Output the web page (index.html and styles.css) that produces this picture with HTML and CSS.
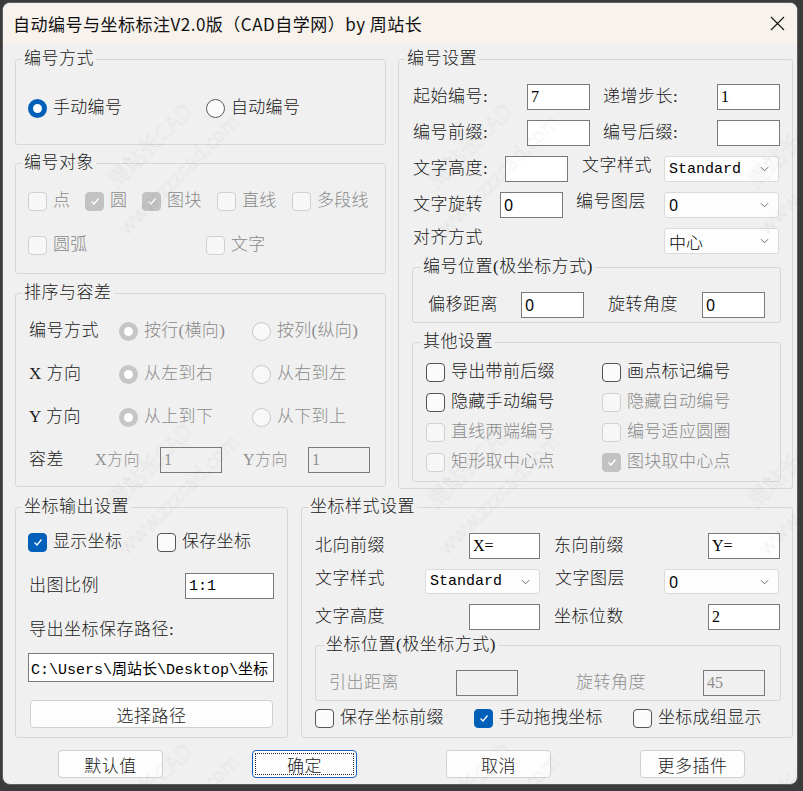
FILE: index.html
```html
<!DOCTYPE html>
<html lang="zh-CN">
<head>
    <meta charset="UTF-8">
    <title>自动编号与坐标标注</title>
    <link rel="stylesheet" href="styles.css">
</head>
<body>
<div class="window">
    <div class="titlebar">
        <span class="title">自动编号与坐标标注V2.0版（CAD自学网）by 周站长</span>
        <svg class="close" width="15" height="15" viewBox="0 0 15 15"><path d="M1 1L14 14M14 1L1 14"/></svg>
    </div>

    <div class="main">
        <div class="top">
            <div class="col">
                <!-- 编号方式 -->
                <fieldset class="grp">
                    <legend>编号方式</legend>
                    <div class="mode">
                        <div class="row r24">
                            <label class="opt w178"><span class="radio on"></span>手动编号</label>
                            <label class="opt"><span class="radio"></span>自动编号</label>
                        </div>
                    </div>
                </fieldset>

                <!-- 编号对象 -->
                <fieldset class="grp target-grp">
                    <legend>编号对象</legend>
                    <div class="target">
                        <div class="row r24">
                            <label class="opt dis w57"><span class="box dis"></span>点</label>
                            <label class="opt dis w57"><span class="box on dis"><svg viewBox="0 0 12 12"><polyline points="2.5,6.5 5,9 9.5,3.5"/></svg></span>圆</label>
                            <label class="opt dis w75"><span class="box on dis"><svg viewBox="0 0 12 12"><polyline points="2.5,6.5 5,9 9.5,3.5"/></svg></span>图块</label>
                            <label class="opt dis w75"><span class="box dis"></span>直线</label>
                            <label class="opt dis"><span class="box dis"></span>多段线</label>
                        </div>
                        <div class="row r24">
                            <label class="opt dis w178"><span class="box dis"></span>圆弧</label>
                            <label class="opt dis"><span class="box dis"></span>文字</label>
                        </div>
                    </div>
                </fieldset>

                <!-- 排序与容差 -->
                <fieldset class="grp sort-grp">
                    <legend>排序与容差</legend>
                    <div class="sort">
                        <div class="row r28">
                            <span class="lbl w90">编号方式</span>
                            <label class="opt dis w133"><span class="radio on dis"></span>按行(横向)</label>
                            <label class="opt dis"><span class="radio dis"></span>按列(纵向)</label>
                        </div>
                        <div class="row r28">
                            <span class="lbl w90">X 方向</span>
                            <label class="opt dis w133"><span class="radio on dis"></span>从左到右</label>
                            <label class="opt dis"><span class="radio dis"></span>从右到左</label>
                        </div>
                        <div class="row r28">
                            <span class="lbl w90">Y 方向</span>
                            <label class="opt dis w133"><span class="radio on dis"></span>从上到下</label>
                            <label class="opt dis"><span class="radio dis"></span>从下到上</label>
                        </div>
                        <div class="row r28">
                            <span class="lbl w66">容差</span>
                            <span class="lbl small dim w65">X方向</span>
                            <input class="field dis w62" value="1" disabled>
                            <span class="lbl small dim w65 ml21">Y方向</span>
                            <input class="field dis w62" value="1" disabled>
                        </div>
                    </div>
                </fieldset>
            </div>

            <!-- 编号设置 -->
            <fieldset class="grp">
                <legend>编号设置</legend>
                <div class="num">
                    <div class="num-rows">
                        <div class="row r26">
                            <span class="lbl w114">起始编号:</span>
                            <input class="field w63" value="7">
                            <span class="lbl w114 ml13">递增步长:</span>
                            <input class="field w63" value="1">
                        </div>
                        <div class="row r26">
                            <span class="lbl w114">编号前缀:</span>
                            <input class="field w63" value="">
                            <span class="lbl w114 ml13">编号后缀:</span>
                            <input class="field w63" value="">
                        </div>
                        <div class="row r26">
                            <span class="lbl w92">文字高度:</span>
                            <input class="field w63" value="">
                            <span class="lbl w82 ml14 up">文字样式</span>
                            <div class="select w115"><span class="mono">Standard</span><svg class="chev" viewBox="0 0 10 6"><polyline points="1,1 5,5 9,1"/></svg></div>
                        </div>
                        <div class="row r26">
                            <span class="lbl w87">文字旋转</span>
                            <input class="field sans w63" value="0">
                            <span class="lbl w88 ml13 up">编号图层</span>
                            <div class="select w115"><span class="sans">0</span><svg class="chev" viewBox="0 0 10 6"><polyline points="1,1 5,5 9,1"/></svg></div>
                        </div>
                        <div class="row r26">
                            <span class="lbl w251 up">对齐方式</span>
                            <div class="select w115"><span>中心</span><svg class="chev" viewBox="0 0 10 6"><polyline points="1,1 5,5 9,1"/></svg></div>
                        </div>
                    </div>

                    <fieldset class="grp sub pos-grp">
                        <legend>编号位置(极坐标方式)</legend>
                        <div class="pos">
                            <div class="row r26">
                                <span class="lbl w93">偏移距离</span>
                                <input class="field sans w63" value="0">
                                <span class="lbl w94 ml24">旋转角度</span>
                                <input class="field sans w63" value="0">
                            </div>
                        </div>
                    </fieldset>

                    <fieldset class="grp sub other-grp">
                        <legend>其他设置</legend>
                        <div class="other">
                            <label class="opt"><span class="box"></span>导出带前后缀</label>
                            <label class="opt"><span class="box"></span>画点标记编号</label>
                            <label class="opt"><span class="box"></span>隐藏手动编号</label>
                            <label class="opt dis"><span class="box dis"></span>隐藏自动编号</label>
                            <label class="opt dis"><span class="box dis"></span>直线两端编号</label>
                            <label class="opt dis"><span class="box dis"></span>编号适应圆圈</label>
                            <label class="opt dis"><span class="box dis"></span>矩形取中心点</label>
                            <label class="opt dis"><span class="box on dis"><svg viewBox="0 0 12 12"><polyline points="2.5,6.5 5,9 9.5,3.5"/></svg></span>图块取中心点</label>
                        </div>
                    </fieldset>
                </div>
            </fieldset>
        </div>

        <div class="bottom">
            <!-- 坐标输出设置 -->
            <fieldset class="grp">
                <legend>坐标输出设置</legend>
                <div class="out">
                    <div class="row r24">
                        <label class="opt w129"><span class="box on"><svg viewBox="0 0 12 12"><polyline points="2.5,6.5 5,9 9.5,3.5"/></svg></span>显示坐标</label>
                        <label class="opt"><span class="box"></span>保存坐标</label>
                    </div>
                    <div class="row r26 out-scale">
                        <span class="lbl w156">出图比例</span>
                        <input class="field mono w89" value="1:1">
                    </div>
                    <div class="row r20 out-path-label">
                        <span class="lbl">导出坐标保存路径:</span>
                    </div>
                    <input class="field mono path" value="C:\Users\周站长\Desktop\坐标.txt">
                    <button class="btn pick">选择路径</button>
                </div>
            </fieldset>

            <!-- 坐标样式设置 -->
            <fieldset class="grp">
                <legend>坐标样式设置</legend>
                <div class="style">
                    <div class="style-rows">
                        <div class="row r26">
                            <span class="lbl w154">北向前缀</span>
                            <input class="field w71" value="X=">
                            <span class="lbl w154 ml14">东向前缀</span>
                            <input class="field w72" value="Y=">
                        </div>
                        <div class="row r25">
                            <span class="lbl w110 up">文字样式</span>
                            <div class="select w115"><span class="mono">Standard</span><svg class="chev" viewBox="0 0 10 6"><polyline points="1,1 5,5 9,1"/></svg></div>
                            <span class="lbl w109 ml15 up">文字图层</span>
                            <div class="select w115"><span class="sans">0</span><svg class="chev" viewBox="0 0 10 6"><polyline points="1,1 5,5 9,1"/></svg></div>
                        </div>
                        <div class="row r26">
                            <span class="lbl w154">文字高度</span>
                            <input class="field w71" value="">
                            <span class="lbl w154 ml14">坐标位数</span>
                            <input class="field w72" value="2">
                        </div>
                    </div>

                    <fieldset class="grp sub lead-grp">
                        <legend>坐标位置(极坐标方式)</legend>
                        <div class="lead">
                            <div class="row r26">
                                <span class="lbl dim w127">引出距离</span>
                                <input class="field dis w62" value="" disabled>
                                <span class="lbl dim w127 ml58">旋转角度</span>
                                <input class="field dis w62" value="45" disabled>
                            </div>
                        </div>
                    </fieldset>

                    <div class="row r24 style-checks">
                        <label class="opt w159"><span class="box"></span>保存坐标前缀</label>
                        <label class="opt w159"><span class="box on"><svg viewBox="0 0 12 12"><polyline points="2.5,6.5 5,9 9.5,3.5"/></svg></span>手动拖拽坐标</label>
                        <label class="opt"><span class="box"></span>坐标成组显示</label>
                    </div>
                </div>
            </fieldset>
        </div>

        <div class="actions">
            <button class="btn">默认值</button>
            <button class="btn default">确定</button>
            <button class="btn">取消</button>
            <button class="btn">更多插件</button>
        </div>
    </div>

    <!-- 水印 -->
    <div class="watermark">
        <div class="mark"><span class="a">周站长CAD</span><span class="b">www.zzzcad.com</span></div>
        <div class="mark"><span class="a">周站长CAD</span><span class="b">www.zzzcad.com</span></div>
        <div class="mark"><span class="a">周站长CAD</span><span class="b">www.zzzcad.com</span></div>
        <div class="mark"><span class="a">周站长CAD</span><span class="b">www.zzzcad.com</span></div>
        <div class="mark"><span class="a">周站长CAD</span><span class="b">www.zzzcad.com</span></div>
        <div class="mark"><span class="a">周站长CAD</span><span class="b">www.zzzcad.com</span></div>
        <div class="mark"><span class="a">周站长CAD</span><span class="b">www.zzzcad.com</span></div>
        <div class="mark"><span class="a">周站长CAD</span><span class="b">www.zzzcad.com</span></div>
        <div class="mark"><span class="a">周站长CAD</span><span class="b">www.zzzcad.com</span></div>
    </div>
</div>
</body>
</html>
```

FILE: styles.css
```css
* {
    box-sizing: border-box;
}

html, body {
    margin: 0;
}

body {
    width: 803px;
    height: 791px;
    overflow: hidden;
    background-color: #3b3b3b;
    font-family: "Liberation Serif", "Noto Sans CJK SC", serif;
    font-size: 17px;
    font-weight: 300;
    color: #1a1a1a;
}

/* fenêtre */
.window {
    position: relative;
    width: 796px;
    height: 783px;
    margin: 2px 0 0 2px;
    border: 1px solid #5e5e5e;
    border-radius: 8px;
    background-color: #f0f0f0;
    overflow: hidden;
}

.titlebar {
    height: 41px;
    display: flex;
    align-items: center;
    justify-content: space-between;
    padding: 0 12px 0 10px;
    background-color: #f8f2ed;
}

.title {
    font-family: "Noto Sans CJK SC", sans-serif;
    font-size: 17px;
    font-weight: 400;
    letter-spacing: 0.5px;
    color: #111;
}

.close {
    fill: none;
    stroke: #1b1b1b;
    stroke-width: 1.2;
}

.main {
    padding: 5px 4px 0 12px;
}

.top {
    display: grid;
    grid-template-columns: 371px 395px;
    column-gap: 12px;
    align-items: start;
}

.bottom {
    display: grid;
    grid-template-columns: 273px 492px;
    column-gap: 13px;
    align-items: start;
    margin-top: 8px;
}

.col {
    display: flex;
    flex-direction: column;
}

/* groupes */
fieldset.grp {
    margin: 0;
    padding: 0;
    min-width: 0;
    border: 1px solid #d7d7d7;
    border-radius: 3px;
}

.grp legend {
    margin-left: 6px;
    padding: 0 2px;
    line-height: 20px;
    font-size: 17px;
    letter-spacing: 0.5px;
    color: #1a1a1a;
}

.grp.sub legend {
    margin-left: 8px;
}

.target-grp {
    margin-top: 8px !important;
}

.sort-grp {
    margin-top: 9px !important;
}

/* lignes */
.row {
    display: flex;
    align-items: center;
}

.r20 { height: 20px; }
.r24 { height: 24px; }
.r25 { height: 25px; }
.r26 { height: 26px; }
.r28 { height: 28px; }

.lbl {
    flex: none;
    line-height: 20px;
    letter-spacing: 0.5px;
    white-space: nowrap;
}

.lbl.up {
    align-self: flex-start;
}

.lbl.dim {
    color: #8f8f8f;
}

.lbl.small {
    font-size: 16px;
}

.w57 { width: 57px; }
.w62 { width: 62px; }
.w63 { width: 63px; }
.w65 { width: 65px; }
.w66 { width: 66px; }
.w71 { width: 71px; }
.w72 { width: 72px; }
.w75 { width: 75px; }
.w82 { width: 82px; }
.w87 { width: 87px; }
.w88 { width: 88px; }
.w89 { width: 89px; }
.w90 { width: 90px; }
.w92 { width: 92px; }
.w93 { width: 93px; }
.w94 { width: 94px; }
.w109 { width: 109px; }
.w110 { width: 110px; }
.w114 { width: 114px; }
.w115 { width: 115px; }
.w127 { width: 127px; }
.w129 { width: 129px; }
.w133 { width: 133px; }
.w154 { width: 154px; }
.w156 { width: 156px; }
.w159 { width: 159px; }
.w178 { width: 178px; }
.w251 { width: 251px; }

.ml13 { margin-left: 13px; }
.ml14 { margin-left: 14px; }
.ml15 { margin-left: 15px; }
.ml21 { margin-left: 21px; }
.ml24 { margin-left: 24px; }
.ml58 { margin-left: 58px; }

/* cases et boutons radio */
.opt {
    flex: none;
    display: flex;
    align-items: center;
    gap: 6px;
    white-space: nowrap;
    line-height: 20px;
    letter-spacing: 0.3px;
}

.opt.dis {
    color: #8a8a8a;
}

.radio {
    flex: none;
    width: 19px;
    height: 19px;
    border-radius: 50%;
    border: 1px solid #5a5a5a;
    background-color: #fbfbfb;
}

.radio.dis {
    border-color: #c9c9c9;
    background-color: #f8f8f8;
}

.radio.on {
    border: 5px solid #005fb8;
    background-color: #fff;
}

.radio.on.dis {
    border-color: #c6c6c6;
}

.box {
    flex: none;
    width: 19px;
    height: 19px;
    display: flex;
    align-items: center;
    justify-content: center;
    border: 1px solid #555;
    border-radius: 4px;
    background-color: #fbfbfb;
}

.box.dis {
    border-color: #d0d0d0;
    background-color: #f7f7f7;
}

.box.on {
    border-color: #005fb8;
    background-color: #005fb8;
}

.box.on.dis {
    border-color: #c2c2c2;
    background-color: #c2c2c2;
}

.box svg {
    width: 12px;
    height: 12px;
    fill: none;
    stroke: #fff;
    stroke-width: 1.3;
}

/* champs */
.field {
    flex: none;
    height: 26px;
    margin: 0;
    padding: 0 3px;
    border: 1px solid #7a7a7a;
    border-radius: 0;
    background-color: #fff;
    font-family: "Liberation Serif", "Noto Sans CJK SC", serif;
    font-size: 16px;
    font-weight: 400;
    color: #000;
    outline: none;
}

.field.dis {
    background-color: transparent;
    color: #8f8f8f;
}

.mono, .field.mono {
    font-family: "Liberation Mono", "Noto Sans CJK SC", monospace;
    font-size: 15px;
    font-weight: 400;
}

.sans, .field.sans {
    font-family: "Noto Sans", sans-serif;
    font-size: 16px;
    font-weight: 400;
}

.select {
    flex: none;
    height: 26px;
    display: flex;
    align-items: center;
    justify-content: space-between;
    padding: 0 9px 0 4px;
    border: 1px solid #dadada;
    border-radius: 3px;
    background-color: #fdfdfd;
    color: #000;
    white-space: nowrap;
}

.r25 .select {
    height: 25px;
}

.chev {
    width: 9px;
    height: 6px;
    fill: none;
    stroke: #5c5c5c;
    stroke-width: 1;
}

.btn {
    height: 28px;
    padding: 0;
    border: 1px solid #d0d0d0;
    border-radius: 4px;
    background-color: #fdfdfd;
    font-family: "Noto Sans CJK SC", sans-serif;
    font-size: 17px;
    font-weight: 300;
    letter-spacing: 0.5px;
    color: #1a1a1a;
}

.btn.default {
    border-color: #1f63b6;
    outline: 1px dotted #222;
    outline-offset: -4px;
}

/* contenu des groupes */
.mode {
    padding: 27px 0 24px 12px;
}

.target {
    display: flex;
    flex-direction: column;
    gap: 20px;
    padding: 16px 0 16px 12px;
}

.sort {
    display: flex;
    flex-direction: column;
    gap: 15px;
    padding: 14px 0 12px 13px;
}

.num {
    padding: 15px 11px 6px 13px;
}

.num-rows {
    display: flex;
    flex-direction: column;
    gap: 10px;
    padding-left: 1px;
}

.pos-grp {
    margin-top: 3px !important;
}

.pos {
    padding: 15px 0 4px 15px;
}

.other-grp {
    margin-top: 9px !important;
}

.other {
    display: grid;
    grid-template-columns: 176px 1fr;
    grid-auto-rows: 24px;
    row-gap: 6px;
    padding: 8px 0 7px 13px;
}

.out {
    display: flex;
    flex-direction: column;
    align-items: flex-start;
    padding: 13px 0 9px 12px;
}

.out-scale {
    margin-top: 19px;
    padding-left: 1px;
}

.out-path-label {
    margin-top: 21px;
    padding-left: 1px;
}

.path {
    width: 246px;
    height: 29px;
    margin-top: 13px;
    padding: 0 2px;
}

.pick {
    width: 243px;
    margin: 18px 0 0 2px;
}

.style {
    padding: 16px 11px 7px 13px;
}

.style-rows {
    display: flex;
    flex-direction: column;
    gap: 10px;
}

.lead-grp {
    margin-top: 5px !important;
}

.lead {
    padding: 15px 0 4px 13px;
}

.style-checks {
    margin-top: 5px;
}

.actions {
    display: flex;
    gap: 89px;
    margin-top: 12px;
    padding-left: 43px;
}

.actions .btn {
    width: 105px;
}

/* filigrane par-dessus la fenêtre */
.watermark {
    position: absolute;
    left: 0;
    top: -4px;
    display: grid;
    grid-template-columns: repeat(3, 320px);
    grid-auto-rows: 320px;
    pointer-events: none;
}

.mark {
    display: flex;
    flex-direction: column;
    align-items: center;
    justify-content: center;
    gap: 18px;
    transform: rotate(-45deg);
    font-family: "Noto Sans CJK SC", sans-serif;
    font-weight: 400;
    color: rgba(0, 0, 0, 0.02);
    -webkit-text-stroke: 0.6px rgba(0, 0, 0, 0.09);
    white-space: nowrap;
}

.mark .a {
    font-size: 22px;
    line-height: 24px;
}

.mark .b {
    font-size: 20px;
    line-height: 24px;
}
```
